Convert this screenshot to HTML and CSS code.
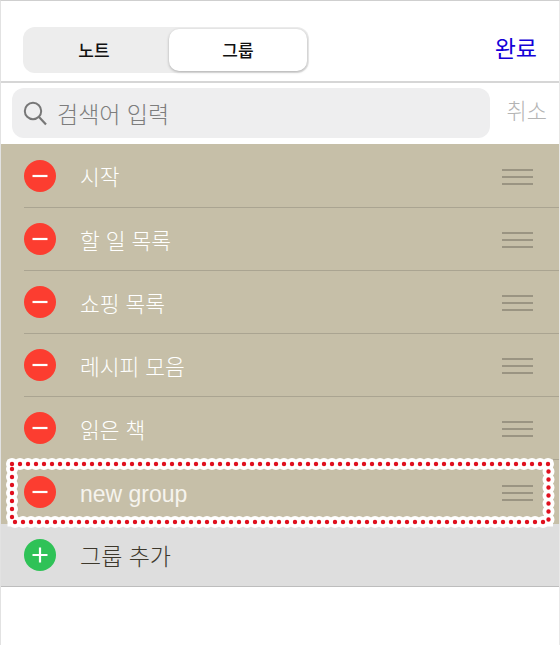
FILE: index.html
```html
<!DOCTYPE html>
<html lang="ko">
<head>
<meta charset="utf-8">
<title>그룹 편집</title>
<link rel="stylesheet" href="styles.css">
</head>
<body>
<div class="screen">
  <header class="topbar">
    <div class="segmented">
      <div class="segment">노트</div>
      <div class="segment segment-active">그룹</div>
    </div>
    <div class="done">완료</div>
  </header>
  <div class="searchbar">
    <div class="searchfield">
      <svg class="search-icon" width="26" height="26" viewBox="0 0 26 26"><circle cx="11" cy="11" r="8.2" fill="none" stroke="#777" stroke-width="2"/><path d="M17 17l7 7.4" fill="none" stroke="#777" stroke-width="2.2"/></svg>
      <span class="placeholder">검색어 입력</span>
    </div>
    <div class="cancel">취소</div>
  </div>
  <ul class="list">
    <li class="row row-first"><span class="badge badge-del"><svg width="32" height="32" viewBox="0 0 32 32"><path d="M8.5 16h15" stroke="#fff" stroke-width="2.2"/></svg></span><span class="label">시작</span><span class="grip"><i></i><i></i><i></i></span></li>
    <li class="row"><span class="badge badge-del"><svg width="32" height="32" viewBox="0 0 32 32"><path d="M8.5 16h15" stroke="#fff" stroke-width="2.2"/></svg></span><span class="label">할 일 목록</span><span class="grip"><i></i><i></i><i></i></span></li>
    <li class="row"><span class="badge badge-del"><svg width="32" height="32" viewBox="0 0 32 32"><path d="M8.5 16h15" stroke="#fff" stroke-width="2.2"/></svg></span><span class="label">쇼핑 목록</span><span class="grip"><i></i><i></i><i></i></span></li>
    <li class="row"><span class="badge badge-del"><svg width="32" height="32" viewBox="0 0 32 32"><path d="M8.5 16h15" stroke="#fff" stroke-width="2.2"/></svg></span><span class="label">레시피 모음</span><span class="grip"><i></i><i></i><i></i></span></li>
    <li class="row"><span class="badge badge-del"><svg width="32" height="32" viewBox="0 0 32 32"><path d="M8.5 16h15" stroke="#fff" stroke-width="2.2"/></svg></span><span class="label">읽은 책</span><span class="grip"><i></i><i></i><i></i></span></li>
    <li class="row row-last"><span class="badge badge-del"><svg width="32" height="32" viewBox="0 0 32 32"><path d="M8.5 16h15" stroke="#fff" stroke-width="2.2"/></svg></span><span class="label label-latin">new group</span><span class="grip"><i></i><i></i><i></i></span></li>
  </ul>
  <div class="add-row"><span class="badge badge-add"><svg width="32" height="32" viewBox="0 0 32 32"><path d="M8.5 16h15M16 8.5v15" stroke="#fff" stroke-width="2.2"/></svg></span><span class="add-label">그룹 추가</span></div>
  <svg class="highlight" width="560" height="80" viewBox="0 0 560 80">
    <rect class="halo" x="12" y="9" width="536.5" height="58"/>
    <rect class="halo-dots" x="12" y="9" width="536.5" height="58"/>
    <rect class="dots" x="12" y="9" width="536.5" height="58"/>
  </svg>
</div>
</body>
</html>
```
FILE: styles.css
```css
* { box-sizing: border-box; }
html, body { margin: 0; padding: 0; background: #fff; }
body { font-family: "Liberation Sans", "Noto Sans CJK KR", sans-serif; }
.screen {
  position: relative;
  width: 560px;
  height: 645px;
  overflow: hidden;
  background: #fff;
  border-top: 1px solid #cfcfcf;
  border-left: 1px solid #e2e2e2;
  border-right: 1px solid #e8e8e8;
}
.topbar {
  height: 82px;
  display: flex;
  align-items: flex-start;
  justify-content: space-between;
  padding: 26px 22px 0 22px;
  border-bottom: 2px solid #d6d6d6;
}
.segmented {
  width: 286px;
  height: 46px;
  padding: 2px 2px 2px 0;
  display: flex;
  background: #ededed;
  border-radius: 12px;
}
.segment {
  flex: 1;
  display: flex;
  align-items: center;
  justify-content: center;
  padding-right: 4px;
  padding-bottom: 2px;
  font-size: 17px;
  font-weight: 500;
  color: #111;
}
.segment-active {
  flex: none;
  width: 138px;
  padding-right: 0;
  background: #fff;
  border-radius: 10px;
  box-shadow: 0 1px 3px rgba(0, 0, 0, 0.28);
}
.done {
  margin-top: 3px;
  font-size: 23px;
  line-height: 38px;
  color: #1400d8;
}
.searchbar {
  height: 61px;
  display: flex;
  align-items: flex-start;
  padding: 5px 12px 0 11px;
  justify-content: space-between;
}
.searchfield {
  width: 478px;
  height: 50px;
  display: flex;
  align-items: center;
  gap: 9px;
  padding-left: 10px;
  background: #eeeeef;
  border-radius: 12px;
}
.search-icon { flex: none; }
.placeholder { font-size: 23px; font-weight: 300; color: #7d7d7d; }
.cancel { font-size: 22px; font-weight: 300; line-height: 48px; color: #b4b4b4; }
.list {
  list-style: none;
  margin: 0 -1px;
  padding: 0;
  background: #c6bfa8;
}
.row {
  height: 63px;
  margin-left: 24px;
  display: flex;
  align-items: center;
  padding-right: 27px;
  border-bottom: 1px solid #aaa491;
}
.row-first { height: 64px; }
.row-last { height: 64px; border-bottom: 0; }
.badge {
  flex: none;
  width: 32px;
  height: 32px;
  border-radius: 50%;
  display: block;
}
.badge svg { display: block; }
.badge-del { background: #fc3d30; }
.badge-add { background: #2fc257; }
.label {
  flex: 1;
  margin-left: 24px;
  font-size: 21.5px;
  font-weight: 300;
  color: #fff;
}
.label-latin { font-size: 23px; padding-top: 4px; color: #f6f4ee; }
.grip { flex: none; width: 31px; display: flex; flex-direction: column; gap: 5px; margin-top: 2px; }
.grip i { display: block; height: 2px; background: #9a9482; }
.add-row {
  height: 63px;
  margin: 0 -1px;
  display: flex;
  align-items: center;
  padding: 0 24px;
  background: #dedede;
  border-bottom: 1px solid #bdbdbd;
}
.add-label { margin-left: 24px; font-size: 23px; font-weight: 300; color: #3d382c; }
.highlight { position: absolute; left: -1px; top: 454px; display: block; }
.highlight rect { fill: none; }
.halo { stroke: #fff; stroke-width: 9; }
.halo-dots { stroke: #fff; stroke-width: 12; stroke-linecap: round; stroke-dasharray: 0 8; }
.dots { stroke: #e0101e; stroke-width: 4.4; stroke-linecap: round; stroke-dasharray: 0 8; }
```
